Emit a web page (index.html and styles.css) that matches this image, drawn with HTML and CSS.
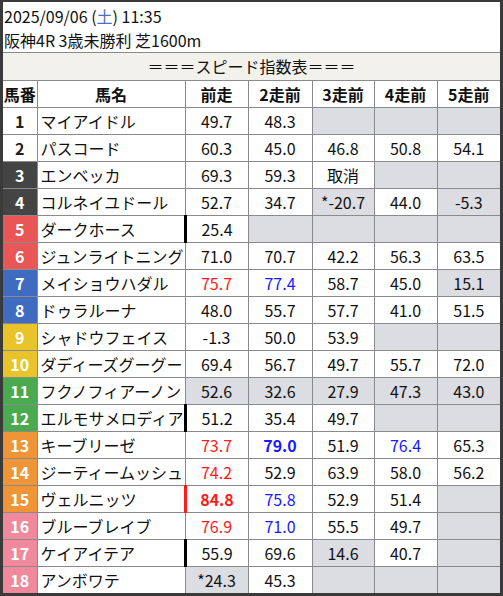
FILE: index.html
```html
<!DOCTYPE html>
<html lang="ja">
<head>
<meta charset="utf-8">
<link rel="stylesheet" href="styles.css">
</head>
<body>
<div class="frame">
  <div class="info">
    <div class="line">2025/09/06 (<span class="sat">土</span>) 11:35</div>
    <div class="line">阪神4R 3歳未勝利 芝1600m</div>
  </div>
  <table class="speed">
    <colgroup>
      <col class="c-no"><col class="c-name"><col class="c-v"><col class="c-v2"><col class="c-v3"><col class="c-v"><col class="c-v">
    </colgroup>
    <thead>
      <tr><th colspan="7" class="title">＝＝＝スピード指数表＝＝＝</th></tr>
      <tr class="head"><th>馬番</th><th>馬名</th><th>前走</th><th>2走前</th><th>3走前</th><th>4走前</th><th>5走前</th></tr>
    </thead>
    <tbody>
      <tr><td class="no w1">1</td><td class="name">マイアイドル</td><td>49.7</td><td>48.3</td><td class="g"></td><td class="g"></td><td class="g"></td></tr>
      <tr><td class="no w1">2</td><td class="name">パスコード</td><td>60.3</td><td>45.0</td><td>46.8</td><td>50.8</td><td>54.1</td></tr>
      <tr><td class="no w2">3</td><td class="name">エンベッカ</td><td>69.3</td><td>59.3</td><td>取消</td><td class="g"></td><td class="g"></td></tr>
      <tr><td class="no w2">4</td><td class="name">コルネイユドール</td><td>52.7</td><td>34.7</td><td class="g">*-20.7</td><td>44.0</td><td class="g">-5.3</td></tr>
      <tr><td class="no w3">5</td><td class="name">ダークホース</td><td class="mk">25.4</td><td class="g"></td><td class="g"></td><td class="g"></td><td class="g"></td></tr>
      <tr><td class="no w3">6</td><td class="name">ジュンライトニング</td><td>71.0</td><td>70.7</td><td>42.2</td><td>56.3</td><td>63.5</td></tr>
      <tr><td class="no w4">7</td><td class="name">メイショウハダル</td><td class="r">75.7</td><td class="b">77.4</td><td>58.7</td><td>45.0</td><td class="g">15.1</td></tr>
      <tr><td class="no w4">8</td><td class="name">ドゥラルーナ</td><td>48.0</td><td>55.7</td><td>57.7</td><td>41.0</td><td>51.5</td></tr>
      <tr><td class="no w5">9</td><td class="name">シャドウフェイス</td><td>-1.3</td><td>50.0</td><td>53.9</td><td class="g"></td><td class="g"></td></tr>
      <tr><td class="no w5">10</td><td class="name">ダディーズグーグー</td><td>69.4</td><td>56.7</td><td>49.7</td><td>55.7</td><td>72.0</td></tr>
      <tr><td class="no w6">11</td><td class="name">フクノフィアーノン</td><td class="g">52.6</td><td class="g">32.6</td><td class="g">27.9</td><td class="g">47.3</td><td class="g">43.0</td></tr>
      <tr><td class="no w6">12</td><td class="name">エルモサメロディア</td><td class="mk">51.2</td><td>35.4</td><td>49.7</td><td class="g"></td><td class="g"></td></tr>
      <tr><td class="no w7">13</td><td class="name">キーブリーゼ</td><td class="r">73.7</td><td class="b bold">79.0</td><td>51.9</td><td class="b">76.4</td><td>65.3</td></tr>
      <tr><td class="no w7">14</td><td class="name">ジーティームッシュ</td><td class="r">74.2</td><td>52.9</td><td>63.9</td><td>58.0</td><td>56.2</td></tr>
      <tr><td class="no w7">15</td><td class="name">ヴェルニッツ</td><td class="r bold mkr">84.8</td><td class="b">75.8</td><td>52.9</td><td>51.4</td><td class="g"></td></tr>
      <tr><td class="no w8">16</td><td class="name">ブルーブレイブ</td><td class="r">76.9</td><td class="b">71.0</td><td>55.5</td><td>49.7</td><td class="g"></td></tr>
      <tr><td class="no w8">17</td><td class="name">ケイアイテア</td><td class="mk">55.9</td><td>69.6</td><td class="g">14.6</td><td>40.7</td><td class="g"></td></tr>
      <tr><td class="no w8">18</td><td class="name">アンボワテ</td><td class="g">*24.3</td><td>45.3</td><td class="g"></td><td class="g"></td><td class="g"></td></tr>
    </tbody>
  </table>
</div>
</body>
</html>
```
FILE: styles.css
```css
* { box-sizing: border-box; }
html, body { margin: 0; padding: 0; background: #fff; }
body {
  font-family: "Noto Sans CJK JP", "Noto Sans", sans-serif;
  color: #111;
}
.frame {
  width: 503px;
  height: 596px;
  border: 3px solid #3a3a3a;
  border-top-width: 2px;
  overflow: hidden;
}
.info {
  height: 51px;
  padding: 2px 0 0 1px;
  border-bottom: 1px solid #8a8a8a;
  font-size: 16px;
}
.info .line { line-height: 24px; height: 24px; }
.sat { color: #4a6fc8; }
.speed {
  width: 497px;
  table-layout: fixed;
  border-collapse: collapse;
  border-style: hidden;
  font-size: 16px;
}
.c-no { width: 34px; }
.c-name { width: 148px; }
.c-v { width: 63px; }
.c-v2 { width: 64px; }
.c-v3 { width: 62px; }
.speed th, .speed td {
  border: 1px solid #8a8a8a;
  height: 27px;
  padding: 0;
  text-align: center;
  line-height: 20px;
  white-space: nowrap;
  overflow: hidden;
}
.speed th.title {
  background: #f2f1ec;
  font-weight: normal;
  height: 27px;
}
.head th { font-weight: bold; height: 27px; }
.speed td.name { text-align: left; padding-left: 3px; }
.speed td.no { font-weight: bold; color: #fff; }
.w1 { background: #fff; color: #222 !important; }
.w2 { background: #444444; }
.w3 { background: #e85656; }
.w4 { background: #3f6cc0; }
.w5 { background: #e8c42a; }
.w6 { background: #4aaa4f; }
.w7 { background: #f09438; }
.w8 { background: #f0899b; }
.g { background: #dcdde2; }
.r { color: #ff1a1a; }
.b { color: #1a1aff; }
.bold { font-weight: bold; }
.speed td.mk { border-left: 3px solid #000; }
.speed td.mkr { border-left: 3px solid #ff1a1a; }
```
